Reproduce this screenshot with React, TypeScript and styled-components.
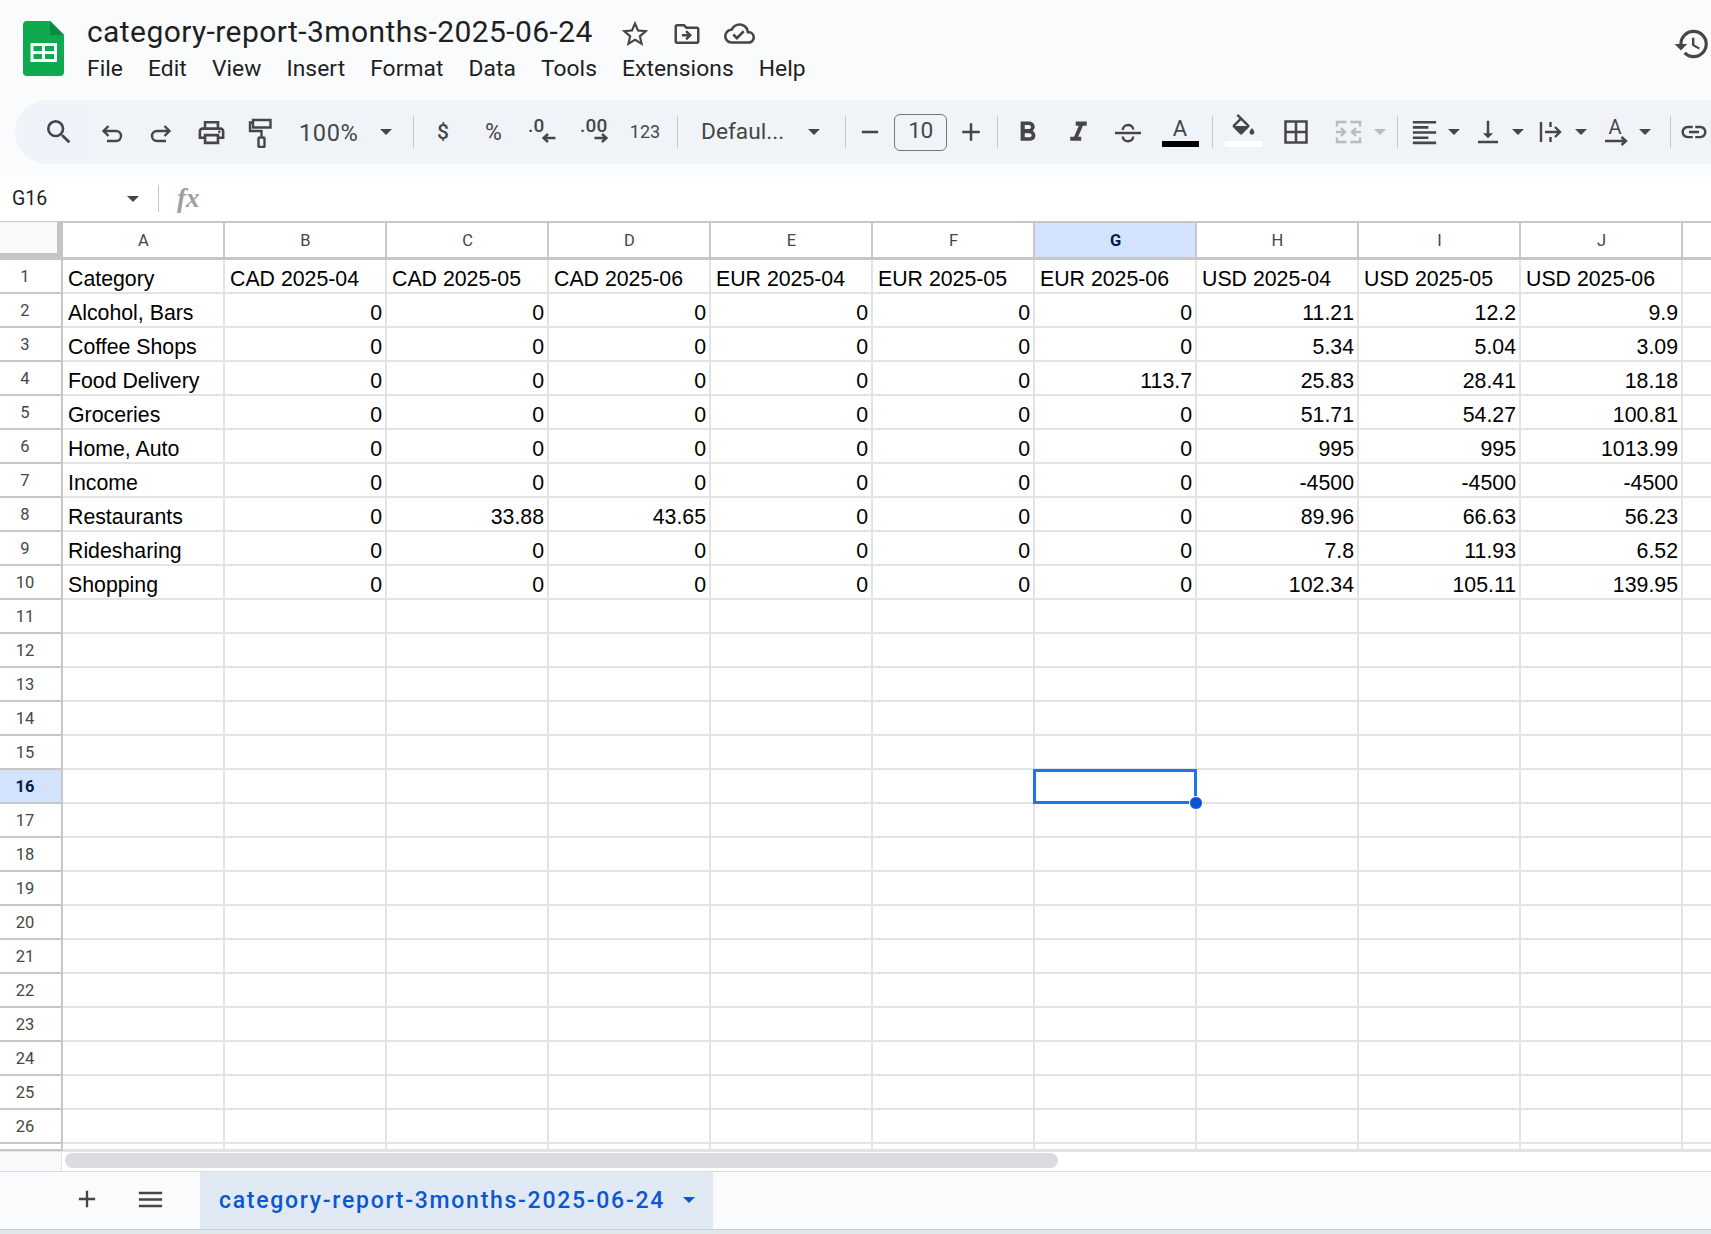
import React from 'react';
import styled, { createGlobalStyle } from 'styled-components';
import {
  MdSearch,
  MdOutlinePrint,
  MdHistory,
  MdStarBorder,
  MdOutlineDriveFileMove,
  MdOutlineCloudDone,
  MdFormatBold,
  MdFormatItalic,
  MdFormatAlignLeft,
  MdVerticalAlignBottom,
  MdLink,
  MdAdd,
  MdRemove,
  MdMenu,
} from 'react-icons/md';

const INK = '#444746';
const COLS = ['A', 'B', 'C', 'D', 'E', 'F', 'G', 'H', 'I', 'J'];
const SHEET_NAME = 'category-report-3months-2025-06-24';
const MENU = ['File', 'Edit', 'View', 'Insert', 'Format', 'Data', 'Tools', 'Extensions', 'Help'];

const ROWS: (string | number)[][] = [
  ['Category', 'CAD 2025-04', 'CAD 2025-05', 'CAD 2025-06', 'EUR 2025-04', 'EUR 2025-05', 'EUR 2025-06', 'USD 2025-04', 'USD 2025-05', 'USD 2025-06'],
  ['Alcohol, Bars', 0, 0, 0, 0, 0, 0, 11.21, 12.2, 9.9],
  ['Coffee Shops', 0, 0, 0, 0, 0, 0, 5.34, 5.04, 3.09],
  ['Food Delivery', 0, 0, 0, 0, 0, 113.7, 25.83, 28.41, 18.18],
  ['Groceries', 0, 0, 0, 0, 0, 0, 51.71, 54.27, 100.81],
  ['Home, Auto', 0, 0, 0, 0, 0, 0, 995, 995, 1013.99],
  ['Income', 0, 0, 0, 0, 0, 0, -4500, -4500, -4500],
  ['Restaurants', 0, 33.88, 43.65, 0, 0, 0, 89.96, 66.63, 56.23],
  ['Ridesharing', 0, 0, 0, 0, 0, 0, 7.8, 11.93, 6.52],
  ['Shopping', 0, 0, 0, 0, 0, 0, 102.34, 105.11, 139.95],
];

const GlobalStyle = createGlobalStyle`
  html, body {
    margin: 0;
    height: 100%;
    overflow: hidden;
    background: #fff;
    font-family: Roboto, "Liberation Sans", sans-serif;
  }
`;

const Page = styled.div`
  width: 1711px;
  height: 1234px;
  overflow: hidden;
  display: flex;
  flex-direction: column;
`;

const TopBar = styled.header`
  background: #f9fbfd;
  padding-bottom: 13px;
`;

const TitleArea = styled.div`
  height: 100px;
  display: flex;
`;

const Logo = styled.svg`
  width: 41px;
  height: 55px;
  margin: 21px 23px 0 23px;
  flex: none;
`;

const TitleColumn = styled.div`
  padding-top: 13px;
`;

const TitleRow = styled.div`
  display: flex;
  align-items: center;
  height: 38px;
`;

const DocTitle = styled.div`
  font-size: 30px;
  line-height: 38px;
  letter-spacing: 0.41px;
  color: #1f1f1f;
  width: 505px;
  white-space: nowrap;
`;

const TitleIcons = styled.div`
  display: flex;
  margin-left: 17px;
  margin-top: 3px;
  color: ${INK};
`;

const TitleIcon = styled.span`
  width: 52px;
  height: 38px;
  display: flex;
  align-items: center;
  justify-content: center;
`;

const MenuRow = styled.nav`
  display: flex;
  gap: 25px;
  margin-top: 3px;
`;

const MenuItem = styled.span`
  font-size: 22.8px;
  line-height: 30px;
  letter-spacing: 0.06px;
  color: #1f1f1f;
`;

const HistoryIcon = styled.div`
  margin: 25px 0 0 auto;
  color: ${INK};
  height: 38px;
`;

const Toolbar = styled.div`
  height: 64px;
  margin-left: 15px;
  padding-left: 14px;
  border-radius: 32px 0 0 32px;
  background: #f0f4f9;
  display: flex;
  align-items: center;
  color: ${INK};
  overflow: hidden;
`;

const ToolButton = styled.div<{ $w: number; $ml?: number; $tint?: boolean; $muted?: boolean }>`
  flex: none;
  width: ${(p) => p.$w}px;
  margin-left: ${(p) => p.$ml ?? 0}px;
  height: 44px;
  display: flex;
  align-items: center;
  justify-content: center;
  color: ${(p) => (p.$muted ? '#b9bcbe' : INK)};
  background: ${(p) => (p.$tint ? '#eef2fb' : 'transparent')};
`;

const Sep = styled.div<{ $ml?: number }>`
  flex: none;
  width: 1px;
  height: 32px;
  margin-left: ${(p) => p.$ml ?? 0}px;
  background: #c7c7c7;
`;

const Caret = styled.span<{ $muted?: boolean; $color?: string }>`
  flex: none;
  width: 0;
  height: 0;
  border-left: 6.5px solid transparent;
  border-right: 6.5px solid transparent;
  border-top: 6.5px solid ${(p) => p.$color ?? (p.$muted ? '#b9bcbe' : INK)};
`;

const PickerButton = styled.div<{ $w: number; $pad: number; $padEnd: number }>`
  flex: none;
  width: ${(p) => p.$w}px;
  padding-left: ${(p) => p.$pad}px;
  padding-right: ${(p) => p.$padEnd}px;
  box-sizing: border-box;
  display: flex;
  align-items: center;
  justify-content: space-between;
`;

const PickerText = styled.span<{ $size?: number; $spread?: number; $drop?: number }>`
  font-size: ${(p) => p.$size ?? 22.7}px;
  line-height: 30px;
  letter-spacing: ${(p) => p.$spread ?? 0}px;
  margin-top: ${(p) => p.$drop ?? 0}px;
  color: ${INK};
  white-space: nowrap;
`;

const SplitButton = styled.div<{ $ml: number; $w?: number; $muted?: boolean }>`
  flex: none;
  width: ${(p) => p.$w ?? 52}px;
  margin-left: ${(p) => p.$ml}px;
  display: flex;
  align-items: center;
  justify-content: space-between;
  box-sizing: border-box;
  color: ${(p) => (p.$muted ? '#b9bcbe' : INK)};
`;

const SplitIcon = styled.span`
  width: 32px;
  height: 32px;
  display: flex;
  align-items: center;
  justify-content: center;
`;

const Glyph = styled.span<{ $size: number; $weight?: number }>`
  font-size: ${(p) => p.$size}px;
  font-weight: ${(p) => p.$weight ?? 400};
  line-height: 1;
`;

const DecimalIcon = styled.div<{ $arrowLeft: number }>`
  display: flex;
  flex-direction: column;
  font-size: 19px;
  font-weight: 500;
  line-height: 18px;
  margin-top: -4px;
  letter-spacing: 0.2px;
  svg {
    display: block;
    margin-left: ${(p) => p.$arrowLeft}px;
    margin-top: -2px;
  }
`;

const FontSizeBox = styled.div`
  flex: none;
  box-sizing: border-box;
  width: 53px;
  height: 37px;
  padding-bottom: 3px;
  border: 1.5px solid #747775;
  border-radius: 6px;
  display: flex;
  align-items: center;
  justify-content: center;
  font-size: 22.7px;
  letter-spacing: -0.5px;
  color: ${INK};
`;

const ColorIcon = styled.div`
  display: flex;
  flex-direction: column;
  align-items: center;
  height: 37px;
  margin-bottom: 7px;
  justify-content: flex-end;
`;

const ColorBar = styled.div<{ $color: string }>`
  width: 37px;
  height: 6px;
  flex: none;
  background: ${(p) => p.$color};
`;

const LetterAbove = styled.span`
  font-size: 22px;
  line-height: 20px;
  margin-bottom: 2px;
`;

const RotateIcon = styled.div`
  display: flex;
  flex-direction: column;
  align-items: center;
  font-size: 20px;
  line-height: 18px;
  svg {
    display: block;
    margin-left: 2px;
  }
`;

const FormulaBar = styled.div`
  height: 44px;
  background: #fff;
  display: flex;
  align-items: center;
  padding-bottom: 1px;
  box-sizing: border-box;
  color: ${INK};
`;

const CellName = styled.div`
  width: 139px;
  flex: none;
  box-sizing: border-box;
  padding-left: 12px;
  font-size: 19.5px;
  color: #1f1f1f;
  display: flex;
  align-items: center;
  justify-content: space-between;
`;

const FormulaDivider = styled.div`
  width: 1px;
  height: 27px;
  background: #c7c7c7;
  margin-left: 19px;
`;

const FxMark = styled.span`
  margin-left: 18px;
  font-family: "Liberation Serif", serif;
  font-style: italic;
  font-weight: 700;
  font-size: 27px;
  color: #9da0a2;
`;

const Grid = styled.div`
  height: 930px;
  overflow: hidden;
  background: #fff;
`;

const Row = styled.div<{ $h: number }>`
  display: flex;
  height: ${(p) => p.$h}px;
`;

const Corner = styled.div`
  flex: none;
  width: 63px;
  box-sizing: border-box;
  background: #f8f9fa;
  border-top: 1px solid #c7c7c7;
  border-right: 6px solid #c4c6c6;
  border-bottom: 7px solid #c4c6c6;
`;

const ColHead = styled.div<{ $active?: boolean; $fill?: boolean }>`
  flex: ${(p) => (p.$fill ? '1' : 'none')};
  width: 162px;
  box-sizing: border-box;
  border-top: 2px solid #c7c7c7;
  border-right: ${(p) => (p.$fill ? '0' : '2px solid #c7c7c7')};
  border-bottom: 3px solid #c7c7c7;
  display: flex;
  align-items: center;
  justify-content: center;
  font-family: Roboto, sans-serif;
  font-size: 16.5px;
  font-weight: ${(p) => (p.$active ? 700 : 400)};
  color: ${(p) => (p.$active ? '#041e49' : INK)};
  background: ${(p) => (p.$active ? '#d3e3fd' : '#fff')};
  padding-left: 1px;
`;

const RowHead = styled.div<{ $active?: boolean }>`
  flex: none;
  width: 63px;
  box-sizing: border-box;
  border-right: 2px solid #c7c7c7;
  border-bottom: 2px solid #c7c7c7;
  padding-right: 11px;
  display: flex;
  align-items: center;
  justify-content: center;
  font-size: 16.5px;
  font-weight: ${(p) => (p.$active ? 700 : 400)};
  color: ${(p) => (p.$active ? '#041e49' : INK)};
  background: ${(p) => (p.$active ? '#d3e3fd' : '#fff')};
`;

const Cell = styled.div<{ $num?: boolean; $fill?: boolean }>`
  position: relative;
  flex: ${(p) => (p.$fill ? '1' : 'none')};
  width: 162px;
  box-sizing: border-box;
  border-right: ${(p) => (p.$fill ? '0' : '2px solid #e2e3e3')};
  border-bottom: 2px solid #e2e3e3;
  padding: 0 3px 0 5px;
  display: flex;
  align-items: flex-end;
  justify-content: ${(p) => (p.$num ? 'flex-end' : 'flex-start')};
  font-family: "Liberation Sans", Arial, sans-serif;
  font-size: 21.3px;
  line-height: 25px;
  color: #000;
  white-space: nowrap;
`;

const SelectionBox = styled.div`
  position: absolute;
  left: -2px;
  top: -1px;
  right: -2px;
  bottom: -2px;
  border: 3px solid #1f74e8;
  box-sizing: border-box;
  z-index: 2;
`;

const FillHandle = styled.div`
  position: absolute;
  right: -9px;
  bottom: -9px;
  width: 12px;
  height: 12px;
  border-radius: 50%;
  background: #0b57d0;
  border: 1px solid #fff;
  z-index: 3;
`;

const ScrollBand = styled.div`
  height: 20px;
  flex: none;
  display: flex;
  background: #fff;
  border-top: 1px solid #e2e3e3;
  box-sizing: border-box;
`;

const ScrollGutter = styled.div`
  width: 61px;
  background: #f8f9fa;
  border-right: 1px solid #e2e3e3;
`;

const ScrollThumb = styled.div`
  width: 993px;
  height: 15px;
  margin: 1px 0 0 3px;
  border-radius: 8px;
  background: #dadce0;
`;

const TabBar = styled.footer`
  height: 59px;
  flex: none;
  display: flex;
  align-items: stretch;
  background: #f9fbfd;
  border-top: 1px solid #dadce0;
  border-bottom: 1px solid #c7ced4;
  box-sizing: border-box;
  color: ${INK};
`;

const TabTool = styled.div<{ $w: number; $ml?: number }>`
  flex: none;
  width: ${(p) => p.$w}px;
  margin-left: ${(p) => p.$ml ?? 0}px;
  padding-bottom: 3px;
  display: flex;
  align-items: center;
  justify-content: center;
`;

const ActiveTab = styled.div`
  flex: none;
  width: 513px;
  margin-left: 11px;
  box-sizing: border-box;
  padding: 0 18px 1px 19px;
  background: #e1e9f5;
  display: flex;
  align-items: center;
  justify-content: space-between;
  color: #0b57d0;
  font-size: 23px;
  font-weight: 500;
  letter-spacing: 1.72px;
  white-space: nowrap;
`;

const BottomStrip = styled.div`
  flex: 1;
  background: #e1e8ec;
`;

const Stroke = styled.svg`
  display: block;
  fill: none;
  stroke: currentColor;
  stroke-width: 2.4;
`;

const formatValue = (v: string | number) => String(v);

const SheetsLogo = () => (
  <Logo viewBox="0 0 41 55">
    <path d="M4 0H27L41 14V51a4 4 0 0 1-4 4H4a4 4 0 0 1-4-4V4a4 4 0 0 1 4-4Z" fill="#0fa94f" />
    <path d="M27 0L41 14H27Z" fill="#0a8a3e" />
    <path d="M7.5 22H34V41H7.5ZM10.5 25V30H19V25ZM22 25V30H31V25ZM10.5 33V38H19V33ZM22 33V38H31V33Z" fill="#fff" fillRule="evenodd" />
  </Logo>
);

const UndoIcon = ({ flip }: { flip?: boolean }) => (
  <Stroke width="26" height="26" viewBox="0 0 26 24" style={flip ? { transform: 'scaleX(-1)' } : undefined}>
    <path d="M9.5 6L4.5 11l5 5M4.5 11H17a5 5 0 0 1 0 10H8" />
  </Stroke>
);

const RollerIcon = () => (
  <Stroke width="26" height="32" viewBox="0 -1.5 26 32">
    <path d="M5 2.5h17.5v7.5H5zM5 5H2v8.5h11.5V19" />
    <rect x="10.5" y="20" width="6" height="9.5" rx="1" />
  </Stroke>
);

const ArrowSmall = ({ left }: { left?: boolean }) => (
  <Stroke width="14" height="10" viewBox="0 0 14 10" style={left ? { transform: 'scaleX(-1)' } : undefined}>
    <path d="M0.5 5H12M8 1l4.5 4L8 9" />
  </Stroke>
);

const StrikeIcon = () => (
  <Stroke width="28" height="24" viewBox="0 -0.5 28 24">
    <path d="M1 12.5h26M8.8 9.5c0-6.5 10.4-6.5 10.4-.5M8.8 16c0 6.5 10.4 6 10.4 0" />
  </Stroke>
);

const FillIcon = () => (
  <svg width="29" height="29" viewBox="0 0 24 24" fill="currentColor" style={{ marginBottom: -2, flex: 'none' }}>
    <path d="M16.56 8.94L7.62 0 6.21 1.41l2.38 2.38-5.15 5.15c-.59.59-.59 1.54 0 2.12l5.5 5.5c.29.29.68.44 1.06.44s.77-.15 1.06-.44l5.5-5.5c.59-.58.59-1.53 0-2.12zM5.21 10L10 5.21 14.79 10H5.21zM19 11.5s-2 2.17-2 3.5c0 1.1.9 2 2 2s2-.9 2-2c0-1.33-2-3.5-2-3.5z" />
    <path d="M5 10h10l-5 5z" />
  </svg>
);

const BordersIcon = () => (
  <Stroke width="24" height="24" viewBox="0 0 24 24" style={{ strokeWidth: 2.5 }}>
    <path d="M1.5 1.5h21v21h-21zM12 1.5v21M1.5 12h21" />
  </Stroke>
);

const MergeIcon = () => (
  <Stroke width="27" height="24" viewBox="0 0 27 24">
    <path d="M11.5 2H2v4.5M15.5 2H25v4.5M11.5 22H2v-4.5M15.5 22H25v-4.5M1 12h9M6 8l4 4-4 4M26 12h-9M21 8l-4 4 4 4" />
  </Stroke>
);

const WrapIcon = () => (
  <Stroke width="24" height="22" viewBox="0 0 24 22">
    <path d="M2 1v20M11.5 1v5M11.5 16v5M6 11h15M16 6l5 5-5 5" />
  </Stroke>
);

const RotateArrow = () => (
  <Stroke width="24" height="10" viewBox="0 0 24 10">
    <path d="M1 5h21M17.5 1l4.5 4-4.5 4" />
  </Stroke>
);

const App = () => (
  <Page>
    <GlobalStyle />
    <TopBar>
      <TitleArea>
        <SheetsLogo />
        <TitleColumn>
          <TitleRow>
            <DocTitle>{SHEET_NAME}</DocTitle>
            <TitleIcons>
              <TitleIcon><MdStarBorder size={32} /></TitleIcon>
              <TitleIcon><MdOutlineDriveFileMove size={30} /></TitleIcon>
              <TitleIcon><MdOutlineCloudDone size={31} /></TitleIcon>
            </TitleIcons>
          </TitleRow>
          <MenuRow>
            {MENU.map((m) => (
              <MenuItem key={m}>{m}</MenuItem>
            ))}
          </MenuRow>
        </TitleColumn>
        <HistoryIcon><MdHistory size={38} /></HistoryIcon>
      </TitleArea>
      <Toolbar>
        <ToolButton $w={59} $tint><MdSearch size={32} /></ToolButton>
        <ToolButton $w={48}><UndoIcon /></ToolButton>
        <ToolButton $w={50}><UndoIcon flip /></ToolButton>
        <ToolButton $w={50}><MdOutlinePrint size={31} /></ToolButton>
        <ToolButton $w={50}><RollerIcon /></ToolButton>
        <PickerButton $w={127} $pad={13} $padEnd={21}>
          <PickerText $size={23.6} $spread={0.6} $drop={1}>100%</PickerText>
          <Caret />
        </PickerButton>
        <Sep />
        <ToolButton $w={58}><Glyph $size={21} $weight={500}>$</Glyph></ToolButton>
        <ToolButton $w={43}><Glyph $size={23}>%</Glyph></ToolButton>
        <ToolButton $w={54}>
          <DecimalIcon $arrowLeft={14}>
            <span>.0</span>
            <ArrowSmall left />
          </DecimalIcon>
        </ToolButton>
        <ToolButton $w={50}>
          <DecimalIcon $arrowLeft={14}>
            <span>.00</span>
            <ArrowSmall />
          </DecimalIcon>
        </ToolButton>
        <ToolButton $w={52}><Glyph $size={18}>123</Glyph></ToolButton>
        <Sep $ml={6} />
        <PickerButton $w={167} $pad={23} $padEnd={25}>
          <PickerText>Defaul...</PickerText>
          <Caret />
        </PickerButton>
        <Sep />
        <ToolButton $w={48}><MdRemove size={28} /></ToolButton>
        <FontSizeBox>10</FontSizeBox>
        <ToolButton $w={47}><MdAdd size={30} /></ToolButton>
        <Sep $ml={3} />
        <ToolButton $w={59}><MdFormatBold size={33} /></ToolButton>
        <ToolButton $w={42}><MdFormatItalic size={33} /></ToolButton>
        <ToolButton $w={58}><StrikeIcon /></ToolButton>
        <ToolButton $w={46}>
          <ColorIcon>
            <LetterAbove>A</LetterAbove>
            <ColorBar $color="#000" />
          </ColorIcon>
        </ToolButton>
        <Sep $ml={9} />
        <ToolButton $w={60}>
          <ColorIcon>
            <FillIcon />
            <ColorBar $color="#fff" />
          </ColorIcon>
        </ToolButton>
        <ToolButton $w={46}><BordersIcon /></ToolButton>
        <SplitButton $ml={13} $w={54} $muted>
          <SplitIcon><MergeIcon /></SplitIcon>
          <Caret $muted />
        </SplitButton>
        <Sep $ml={11} />
        <SplitButton $ml={10}>
          <SplitIcon><MdFormatAlignLeft size={31} /></SplitIcon>
          <Caret />
        </SplitButton>
        <SplitButton $ml={12}>
          <SplitIcon><MdVerticalAlignBottom size={30} /></SplitIcon>
          <Caret />
        </SplitButton>
        <SplitButton $ml={11}>
          <SplitIcon><WrapIcon /></SplitIcon>
          <Caret />
        </SplitButton>
        <SplitButton $ml={12}>
          <SplitIcon>
            <RotateIcon>
              <span>A</span>
              <RotateArrow />
            </RotateIcon>
          </SplitIcon>
          <Caret />
        </SplitButton>
        <Sep $ml={19} />
        <ToolButton $w={46}><MdLink size={30} /></ToolButton>
      </Toolbar>
    </TopBar>
    <FormulaBar>
      <CellName>
        G16
        <Caret />
      </CellName>
      <FormulaDivider />
      <FxMark>fx</FxMark>
    </FormulaBar>
    <Grid>
      <Row $h={39}>
        <Corner />
        {COLS.map((c) => (
          <ColHead key={c} $active={c === 'G'}>{c}</ColHead>
        ))}
        <ColHead $fill />
      </Row>
      {Array.from({ length: 27 }, (_, i) => (
        <Row key={i} $h={i === 26 ? 7 : 34}>
          <RowHead $active={i === 15}>{i < 26 ? i + 1 : ''}</RowHead>
          {COLS.map((c, j) => {
            const v = ROWS[i]?.[j];
            const selected = i === 15 && c === 'G';
            return (
              <Cell key={c} $num={typeof v === 'number'}>
                {v !== undefined ? formatValue(v) : ''}
                {selected && (
                  <SelectionBox>
                    <FillHandle />
                  </SelectionBox>
                )}
              </Cell>
            );
          })}
          <Cell $fill />
        </Row>
      ))}
    </Grid>
    <ScrollBand>
      <ScrollGutter />
      <ScrollThumb />
    </ScrollBand>
    <TabBar>
      <TabTool $w={48} $ml={63}><MdAdd size={28} /></TabTool>
      <TabTool $w={78}><MdMenu size={31} /></TabTool>
      <ActiveTab>
        {SHEET_NAME}
        <Caret $color="#0b57d0" />
      </ActiveTab>
    </TabBar>
    <BottomStrip />
  </Page>
);

export default App;
